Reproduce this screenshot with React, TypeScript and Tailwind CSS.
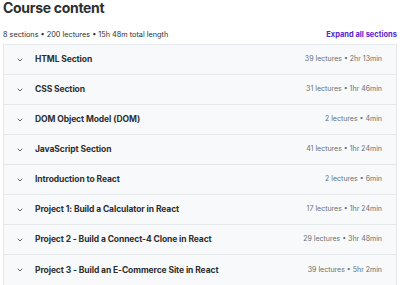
import { ReactNode } from "react";

interface Section {
  title: string;
  meta: string;
}

const sections: Section[] = [
  { title: "HTML Section", meta: "39 lectures • 2hr 13min" },
  { title: "CSS Section", meta: "31 lectures • 1hr 46min" },
  { title: "DOM Object Model (DOM)", meta: "2 lectures • 4min" },
  { title: "JavaScript Section", meta: "41 lectures • 1hr 24min" },
  { title: "Introduction to React", meta: "2 lectures • 6min" },
  { title: "Project 1: Build a Calculator in React", meta: "17 lectures • 1hr 24min" },
  { title: "Project 2 - Build a Connect-4 Clone in React", meta: "29 lectures • 3hr 48min" },
  { title: "Project 3 - Build an E-Commerce Site in React", meta: "39 lectures • 5hr 2min" },
];

const Chevron = () => (
  <svg width="8" height="8" viewBox="0 0 24 24" fill="none" stroke="#3e4143" strokeWidth="2.5" strokeLinecap="round" strokeLinejoin="round">
    <path d="M6 9l6 6 6-6" />
  </svg>
);

const Row = ({ children, meta }: { children: ReactNode; meta: string }) => (
  <div className="flex items-center h-[30px] bg-[#f7f9fa] border-b border-[#e4e8eb] last:border-b-0 pl-[12px] pr-[14px]">
    <Chevron />
    <span className="ml-[11px] text-[8.5px] font-bold text-[#2d2f31] tracking-[-0.1px]">{children}</span>
    <span className="ml-auto text-[7px] text-[#6a6f73]">{meta}</span>
  </div>
);

export default function App() {
  return (
    <div className="w-[400px] h-[285px] bg-white overflow-hidden font-['Inter','Liberation_Sans',sans-serif] text-[#2d2f31]">
      <h2 className="text-[14px] leading-[17px] font-bold tracking-[-0.3px] pl-[3px] -mt-[1px]">Course content</h2>
      <div className="flex items-center justify-between px-[3px] mt-[13px] h-[12px]">
        <span className="text-[7.3px] text-[#2d2f31]">8 sections • 200 lectures • 15h 48m total length</span>
        <span className="text-[7.5px] font-bold text-[#5624d0]">Expand all sections</span>
      </div>
      <div className="mx-[3px] mt-[3px] border border-[#e4e8eb]">
        {sections.map((s) => (
          <Row key={s.title} meta={s.meta}>{s.title}</Row>
        ))}
      </div>
    </div>
  );
}
